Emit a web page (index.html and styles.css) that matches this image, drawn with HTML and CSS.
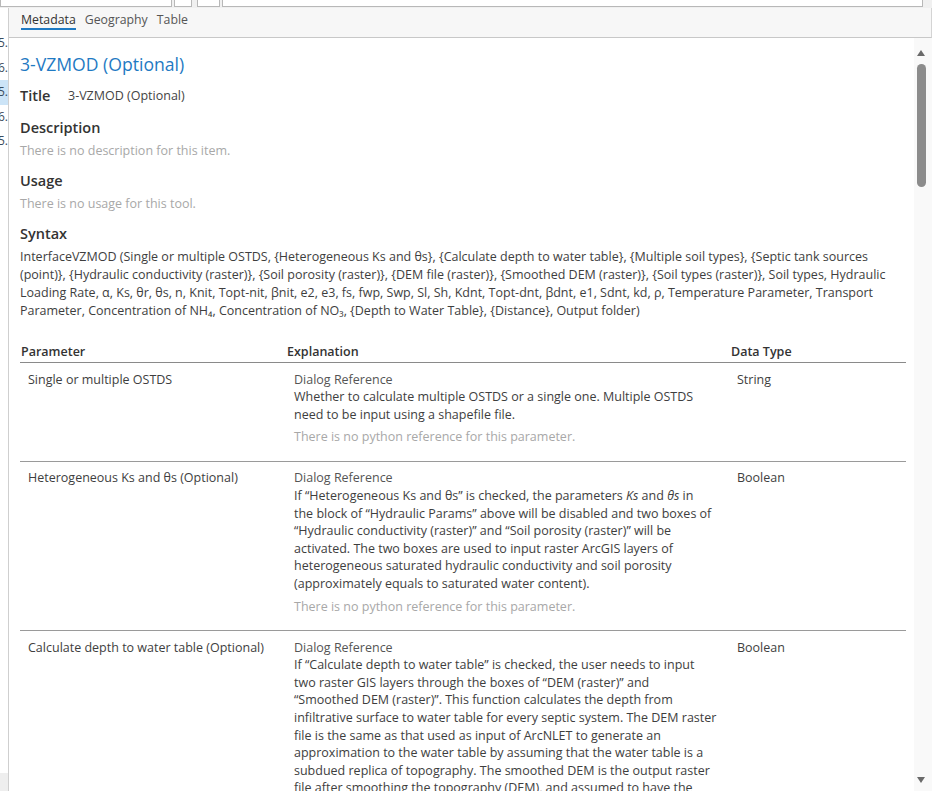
FILE: index.html
```html
<!DOCTYPE html>
<html lang="en">
<head>
<meta charset="utf-8">
<title>3-VZMOD (Optional) - Metadata</title>
<link rel="stylesheet" href="styles.css">
</head>
<body>
<div class="window">
  <div class="toolbar">
    <div class="tb-input"></div>
    <div class="tb-btn tb-small"></div>
    <div class="tb-btn tb-drop"></div>
    <div class="tb-search"></div>
  </div>
  <div class="main">
    <div class="side">
      <div class="side-row">2.5.</div>
      <div class="side-row">2.6.</div>
      <div class="side-row sel">3.5.</div>
      <div class="side-row">4.6.</div>
      <div class="side-row">5.5.</div>
      <div class="side-foot"></div>
    </div>
    <div class="panel">
      <div class="tabs">
        <div class="tab active">Metadata</div>
        <div class="tab">Geography</div>
        <div class="tab">Table</div>
      </div>
      <div class="content">
        <div class="doc">
          <h1 class="doc-title">3-VZMOD (Optional)</h1>
          <div class="title-row">
            <span class="title-label">Title</span>
            <span class="title-value">3-VZMOD (Optional)</span>
          </div>
          <h2 class="sec">Description</h2>
          <p class="muted">There is no description for this item.</p>
          <h2 class="sec">Usage</h2>
          <p class="muted">There is no usage for this tool.</p>
          <h2 class="sec">Syntax</h2>
          <p class="syntax">InterfaceVZMOD (Single or multiple OSTDS, {Heterogeneous Ks and θs}, {Calculate depth to water table}, {Multiple soil types}, {Septic tank sources (point)}, {Hydraulic conductivity (raster)}, {Soil porosity (raster)}, {DEM file (raster)}, {Smoothed DEM (raster)}, {Soil types (raster)}, Soil types, Hydraulic Loading Rate, α, Ks, θr, θs, n, Knit, Topt-nit, βnit, e2, e3, fs, fwp, Swp, Sl, Sh, Kdnt, Topt-dnt, βdnt, e1, Sdnt, kd, ρ, Temperature Parameter, Transport Parameter, Concentration of NH₄, Concentration of NO₃, {Depth to Water Table}, {Distance}, Output folder)</p>

          <table class="params">
            <colgroup>
              <col class="c-param">
              <col class="c-expl">
              <col class="c-type">
            </colgroup>
            <thead>
              <tr><th>Parameter</th><th>Explanation</th><th>Data Type</th></tr>
            </thead>
            <tbody>
              <tr>
                <td>Single or multiple OSTDS</td>
                <td>
                  <div class="dlg">Dialog Reference</div>
                  <div class="expl">Whether to calculate multiple OSTDS or a single one. Multiple OSTDS<br>need to be input using a shapefile file.</div>
                  <div class="muted py">There is no python reference for this parameter.</div>
                </td>
                <td>String</td>
              </tr>
              <tr>
                <td>Heterogeneous Ks and θs (Optional)</td>
                <td>
                  <div class="dlg">Dialog Reference</div>
                  <div class="expl">If “Heterogeneous Ks and θs” is checked, the parameters <i>Ks</i> and <i>θs</i> in<br>the block of “Hydraulic Params” above will be disabled and two boxes of<br>“Hydraulic conductivity (raster)” and “Soil porosity (raster)” will be<br>activated. The two boxes are used to input raster ArcGIS layers of<br>heterogeneous saturated hydraulic conductivity and soil porosity<br>(approximately equals to saturated water content).</div>
                  <div class="muted py">There is no python reference for this parameter.</div>
                </td>
                <td>Boolean</td>
              </tr>
              <tr>
                <td>Calculate depth to water table (Optional)</td>
                <td>
                  <div class="dlg">Dialog Reference</div>
                  <div class="expl">If “Calculate depth to water table” is checked, the user needs to input<br>two raster GIS layers through the boxes of “DEM (raster)” and<br>“Smoothed DEM (raster)”. This function calculates the depth from<br>infiltrative surface to water table for every septic system. The DEM raster<br>file is the same as that used as input of ArcNLET to generate an<br>approximation to the water table by assuming that the water table is a<br>subdued replica of topography. The smoothed DEM is the output raster<br>file after smoothing the topography (DEM), and assumed to have the<br>same pattern as the water table.</div>
                  <div class="muted py">There is no python reference for this parameter.</div>
                </td>
                <td>Boolean</td>
              </tr>
            </tbody>
          </table>
        </div>
        <div class="scrollbar">
          <div class="arrow-up"></div>
          <div class="thumb"></div>
          <div class="arrow-down"></div>
        </div>
      </div>
    </div>
  </div>
</div>
</body>
</html>
```
FILE: styles.css
```css
html, body {
  margin: 0;
  padding: 0;
}
body {
  width: 932px;
  height: 791px;
  overflow: hidden;
  background: #ffffff;
  font-family: "Open Sans", "Noto Sans", "DejaVu Sans", sans-serif;
  font-size: 12.5px;
  color: #3e3e3e;
}
.window {
  display: flex;
  flex-direction: column;
  height: 791px;
}

/* top toolbar, mostly scrolled off */
.toolbar {
  height: 8px;
  flex: none;
  display: flex;
  align-items: flex-end;
  background: #f0f0f0;
  overflow: hidden;
}
.tb-input, .tb-btn, .tb-search {
  height: 26px;
  box-sizing: border-box;
  border: 1px solid #b8b8b8;
  background: #ffffff;
  margin-bottom: 1px;
  flex: none;
}
.tb-input { width: 172px; }
.tb-small { width: 18px; margin-left: 2px; }
.tb-drop { width: 23px; margin-left: 5px; }
.tb-search { width: 701px; margin-left: 2px; }

.main {
  flex: 1;
  display: flex;
  min-height: 0;
}

/* left list strip */
.side {
  width: 8px;
  flex: none;
  border-right: 1px solid #cfcfcf;
  background: #ffffff;
  display: flex;
  flex-direction: column;
  padding-top: 23px;
}
.side-row {
  height: 24.5px;
  line-height: 24.5px;
  display: flex;
  justify-content: flex-end;
  white-space: nowrap;
  overflow: hidden;
  font-size: 12px;
  color: #3b4c5e;
}
.side-row.sel { background: #cce4f7; }
.side-foot {
  margin-top: auto;
  height: 18px;
  background: #eeeeee;
}

.panel {
  flex: 1;
  display: flex;
  flex-direction: column;
  min-width: 0;
}
.tabs {
  height: 29px;
  flex: none;
  background: #f7f7f7;
  border-bottom: 1px solid #c8c8c8;
  border-right: 1px solid #d4d4d4;
  display: flex;
  align-items: flex-start;
  gap: 9px;
  padding-left: 12px;
}
.tab {
  padding-top: 4px;
  line-height: 16px;
  padding-bottom: 0;
  border-bottom: 2px solid transparent;
  color: #555555;
  font-size: 12.3px;
}
.tab.active {
  color: #333333;
  border-bottom-color: #1f7ac3;
}

.content {
  flex: 1;
  display: flex;
  min-height: 0;
}
.doc {
  flex: 1;
  min-width: 0;
  padding: 14px 8px 0 11px;
  overflow: hidden;
}
.doc-title {
  margin: 0;
  font-size: 17.6px;
  line-height: 24px;
  font-weight: 400;
  color: #1f7ac3;
}
.title-row {
  display: flex;
  margin: 10px 0 0;
  padding-bottom: 1px;
  line-height: 20px;
}
.title-label {
  width: 48px;
  flex: none;
  font-size: 14.5px;
  font-weight: 600;
  color: #333333;
}
.title-value {
  font-size: 12.5px;
  color: #444444;
}
.sec {
  margin: 11px 0 4px;
  font-size: 14.5px;
  line-height: 20px;
  font-weight: 600;
  color: #333333;
}
p { margin: 0; }
.muted {
  color: #a8a8a8;
  line-height: 18px;
}
.syntax {
  line-height: 18px;
}

.params {
  margin-top: 23px;
  width: 886px;
  table-layout: fixed;
  border-collapse: collapse;
}
.c-param { width: 267px; }
.c-expl { width: 444px; }
.c-type { width: 175px; }
.params th {
  text-align: left;
  font-weight: 600;
  color: #333333;
  padding: 0 0 1px;
  line-height: 18px;
  border-bottom: 1px solid #8a8a8a;
}
.params th:first-child { padding-left: 1px; }
.params td {
  vertical-align: top;
  padding: 7.5px 4px 15px 8px;
  line-height: 17.6px;
  border-bottom: 1px solid #9a9a9a;
}
.params td:nth-child(2) { padding-left: 7px; padding-right: 0; }
.params td:nth-child(3) { padding-left: 6px; }
.expl { white-space: nowrap; }
.dlg { color: #555555; }
.py {
  margin-top: 5px;
  line-height: 17.6px;
}

.scrollbar {
  width: 18px;
  flex: none;
  background: #f9f9f9;
  display: flex;
  flex-direction: column;
  align-items: flex-start;
  padding: 12px 0 8px 3px;
  box-sizing: border-box;
}
.arrow-up, .arrow-down {
  width: 0;
  height: 0;
  border-left: 4px solid transparent;
  border-right: 4px solid transparent;
}
.arrow-up { border-bottom: 6px solid #6a6a6a; }
.arrow-down { border-top: 6px solid #6a6a6a; margin-top: auto; }
.thumb {
  margin-top: 8px;
  width: 9px;
  height: 123px;
  border-radius: 5px;
  background: #8c8c8c;
}
```
